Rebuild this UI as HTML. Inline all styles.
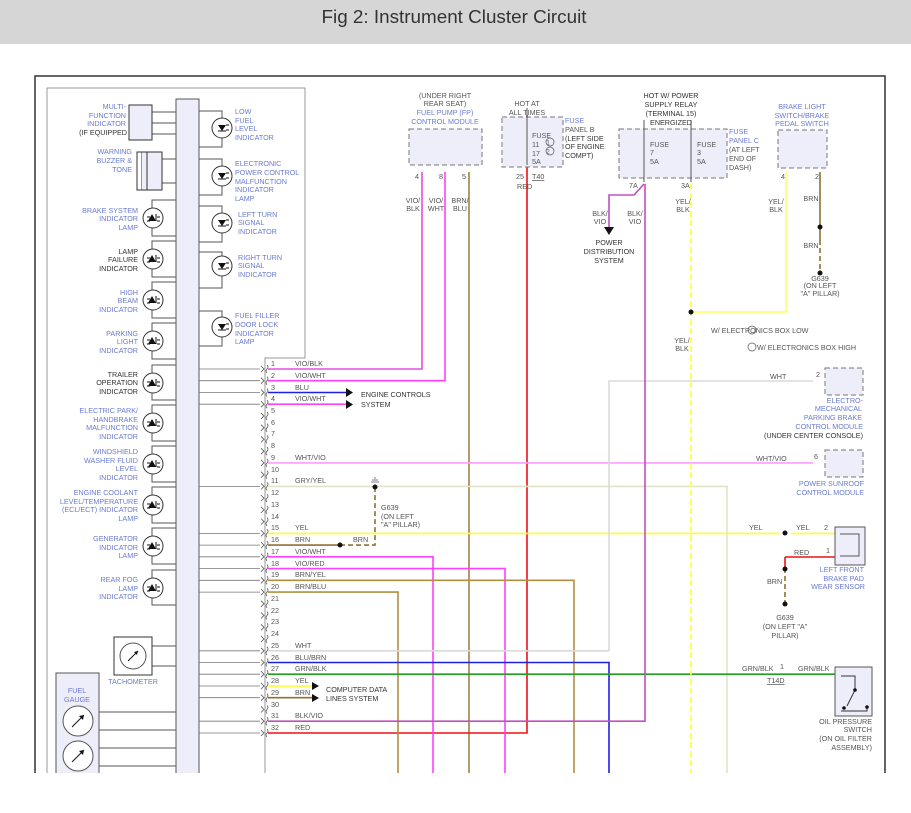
<!DOCTYPE html>
<html><head><meta charset="utf-8"><style>
html,body{margin:0;padding:0;background:#fff;width:911px;height:813px;overflow:hidden}
svg{display:block}
text{font-family:"Liberation Sans",sans-serif;font-size:7.2px;fill:#555}
.b{fill:#6a7bd0}
.r{text-anchor:end}
.m{text-anchor:middle}
.dk{fill:#333}
</style></head><body>
<svg width="911" height="813" viewBox="0 0 911 813" xmlns="http://www.w3.org/2000/svg">
<defs>
<clipPath id="c"><rect x="0" y="0" width="911" height="773"/></clipPath>
<g id="led"><circle r="10" fill="#fff" stroke="#333" stroke-width="1"/><path d="M-1,-4 L3,3 L-5,3 Z" fill="#111"/><path d="M-6,-1h3M-6,3h3M3,-4v7M4,-1h3M4,3h3" stroke="#111" stroke-width="1"/></g>
<g id="ledr"><circle r="10" fill="#fff" stroke="#333" stroke-width="1"/><path d="M-4,-3 L4,-3 L0,3 Z" fill="#111"/><path d="M-4,3h8M4,-3h3M4,2h3" stroke="#111" stroke-width="1"/></g>
<g id="pin"><path d="M-5,-3 l3,3 l-3,3" fill="none" stroke="#555" stroke-width="0.8"/><path d="M1,-4 q2,2 0,4 q-2,2 0,4" fill="none" stroke="#555" stroke-width="0.8"/></g>
</defs>
<rect x="0" y="0" width="911" height="44" fill="#d6d6d6"/>
<text x="454" y="23" class="m" style="font-size:18px;fill:#333" textLength="265" lengthAdjust="spacingAndGlyphs">Fig 2: Instrument Cluster Circuit</text>

<g clip-path="url(#c)">
<rect x="35" y="76" width="850" height="720" fill="#fff" stroke="#333" stroke-width="1.5"/>
<path d="M47,800 V88 H305 V358 H265 V800" fill="none" stroke="#999" stroke-width="1"/>
<rect x="176" y="99" width="23" height="720" fill="#eeeefa" stroke="#555" stroke-width="1"/>

<!-- left column LED boxes -->
<g stroke="#555" fill="none" stroke-width="1">
<path d="M176,200 H152 V236 H176"/><path d="M176,241 H152 V277 H176"/><path d="M176,282 H152 V318 H176"/><path d="M176,323 H152 V359 H176"/>
<path d="M176,365 H152 V400 H176"/><path d="M176,405 H152 V441 H176"/><path d="M176,446 H152 V482 H176"/><path d="M176,487 H152 V523 H176"/>
<path d="M176,528 H152 V564 H176"/><path d="M176,570 H152 V605 H176"/>
<path d="M199,111 H222 V147 H199"/><path d="M199,159 H222 V195 H199"/><path d="M199,206 H222 V242 H199"/><path d="M199,252 H222 V288 H199"/><path d="M199,311 H222 V346 H199"/>
<path d="M152,112 H176 M152,123 H176 M152,134 H176"/>
<path d="M162,159 H176 M162,183 H176"/>
<path d="M152,646 H176 M152,666 H176"/>
<path d="M92,712 H176 M92,730 H176 M92,748 H176 M92,766 H176"/>
</g>
<use href="#led" x="153" y="218"/><use href="#led" x="153" y="259"/><use href="#led" x="153" y="300"/><use href="#led" x="153" y="341"/>
<use href="#led" x="153" y="383"/><use href="#led" x="153" y="423"/><use href="#led" x="153" y="464"/><use href="#led" x="153" y="505"/>
<use href="#led" x="153" y="546"/><use href="#led" x="153" y="588"/>
<use href="#ledr" x="222" y="128"/><use href="#ledr" x="222" y="176"/><use href="#ledr" x="222" y="223"/><use href="#ledr" x="222" y="266"/><use href="#ledr" x="222" y="327"/>

<rect x="129" y="105" width="23" height="35" fill="#eeeefa" stroke="#333"/>
<path d="M137,152 L142,152 L142,190 L137,190 Z" fill="#fff" stroke="#333"/>
<path d="M142,152 L147,152 L147,190 L142,190" fill="#eeeefa" stroke="#333"/>
<rect x="147" y="152" width="15" height="38" fill="#eeeefa" stroke="#333"/>
<rect x="114" y="637" width="38" height="38" fill="#fff" stroke="#333"/>
<circle cx="133" cy="656" r="13" fill="#fff" stroke="#555"/><path d="M128,661 L138,651" stroke="#111" stroke-width="1"/><path d="M138,651 l-4,1 l3,3z" fill="#111"/>
<rect x="56" y="673" width="43" height="120" fill="#eeeefa" stroke="#555"/>
<circle cx="78" cy="721" r="15" fill="#fff" stroke="#555"/><path d="M72,727 L84,715" stroke="#111"/><path d="M84,715 l-5,1 l4,4z" fill="#111"/>
<circle cx="78" cy="756" r="15" fill="#fff" stroke="#555"/><path d="M72,762 L84,750" stroke="#111"/><path d="M84,750 l-5,1 l4,4z" fill="#111"/>

<!-- left labels -->
<g class="r">
<text x="126" y="109" class="b r">MULTI-</text><text x="126" y="118" class="b r">FUNCTION</text><text x="126" y="126" class="b r">INDICATOR</text><text x="127" y="135" class="dk r">(IF EQUIPPED</text>
<text x="132" y="154" class="b r">WARNING</text><text x="132" y="163" class="b r">BUZZER &amp;</text><text x="132" y="172" class="b r">TONE</text>
<text x="138" y="213" class="b r">BRAKE SYSTEM</text><text x="138" y="221" class="b r">INDICATOR</text><text x="138" y="230" class="b r">LAMP</text>
<text x="138" y="254" class="dk r">LAMP</text><text x="138" y="262" class="dk r">FAILURE</text><text x="138" y="271" class="dk r">INDICATOR</text>
<text x="138" y="295" class="b r">HIGH</text><text x="138" y="303" class="b r">BEAM</text><text x="138" y="312" class="b r">INDICATOR</text>
<text x="138" y="336" class="b r">PARKING</text><text x="138" y="344" class="b r">LIGHT</text><text x="138" y="353" class="b r">INDICATOR</text>
<text x="138" y="377" class="dk r">TRAILER</text><text x="138" y="385" class="dk r">OPERATION</text><text x="138" y="394" class="dk r">INDICATOR</text>
<text x="138" y="413" class="b r">ELECTRIC PARK/</text><text x="138" y="422" class="b r">HANDBRAKE</text><text x="138" y="430" class="b r">MALFUNCTION</text><text x="138" y="439" class="b r">INDICATOR</text>
<text x="138" y="454" class="b r">WINDSHIELD</text><text x="138" y="463" class="b r">WASHER FLUID</text><text x="138" y="471" class="b r">LEVEL</text><text x="138" y="480" class="b r">INDICATOR</text>
<text x="138" y="495" class="b r">ENGINE COOLANT</text><text x="138" y="504" class="b r">LEVEL/TEMPERATURE</text><text x="138" y="512" class="b r">(ECL/ECT) INDICATOR</text><text x="138" y="521" class="b r">LAMP</text>
<text x="138" y="541" class="b r">GENERATOR</text><text x="138" y="550" class="b r">INDICATOR</text><text x="138" y="558" class="b r">LAMP</text>
<text x="138" y="582" class="b r">REAR FOG</text><text x="138" y="591" class="b r">LAMP</text><text x="138" y="599" class="b r">INDICATOR</text>
</g>
<text x="133" y="684" class="b m">TACHOMETER</text>
<text x="77" y="693" class="b m">FUEL</text><text x="77" y="702" class="b m">GAUGE</text>
<text x="235" y="114" class="b">LOW</text><text x="235" y="123" class="b">FUEL</text><text x="235" y="131" class="b">LEVEL</text><text x="235" y="140" class="b">INDICATOR</text>
<text x="235" y="166" class="b">ELECTRONIC</text><text x="235" y="175" class="b">POWER CONTROL</text><text x="235" y="184" class="b">MALFUNCTION</text><text x="235" y="192" class="b">INDICATOR</text><text x="235" y="201" class="b">LAMP</text>
<text x="238" y="217" class="b">LEFT TURN</text><text x="238" y="225" class="b">SIGNAL</text><text x="238" y="234" class="b">INDICATOR</text>
<text x="238" y="260" class="b">RIGHT TURN</text><text x="238" y="268" class="b">SIGNAL</text><text x="238" y="277" class="b">INDICATOR</text>
<text x="235" y="318" class="b">FUEL FILLER</text><text x="235" y="327" class="b">DOOR LOCK</text><text x="235" y="336" class="b">INDICATOR</text><text x="235" y="344" class="b">LAMP</text>

<!-- stubs from bar to pins -->
<g stroke="#777" stroke-width="0.8">
<path d="M199,369H260M199,380.7H260M199,392.5H260M199,404.2H260M199,486.4H260M199,533.4H260M199,545.1H260M199,556.8H260M199,568.6H260M199,580.3H260M199,592.1H260M199,650.8H260M199,662.5H260M199,674.2H260M199,686H260M199,697.7H260M199,721.2H260M199,733H260"/>
</g>
<g>
<use href="#pin" x="266" y="369"/><use href="#pin" x="266" y="380.7"/><use href="#pin" x="266" y="392.5"/><use href="#pin" x="266" y="404.2"/><use href="#pin" x="266" y="416"/><use href="#pin" x="266" y="427.7"/><use href="#pin" x="266" y="439.4"/><use href="#pin" x="266" y="451.2"/><use href="#pin" x="266" y="462.9"/><use href="#pin" x="266" y="474.7"/><use href="#pin" x="266" y="486.4"/><use href="#pin" x="266" y="498.1"/><use href="#pin" x="266" y="509.9"/><use href="#pin" x="266" y="521.6"/><use href="#pin" x="266" y="533.4"/><use href="#pin" x="266" y="545.1"/><use href="#pin" x="266" y="556.8"/><use href="#pin" x="266" y="568.6"/><use href="#pin" x="266" y="580.3"/><use href="#pin" x="266" y="592.1"/><use href="#pin" x="266" y="603.8"/><use href="#pin" x="266" y="615.5"/><use href="#pin" x="266" y="627.3"/><use href="#pin" x="266" y="639"/><use href="#pin" x="266" y="650.8"/><use href="#pin" x="266" y="662.5"/><use href="#pin" x="266" y="674.2"/><use href="#pin" x="266" y="686"/><use href="#pin" x="266" y="697.7"/><use href="#pin" x="266" y="709.5"/><use href="#pin" x="266" y="721.2"/><use href="#pin" x="266" y="733"/>
</g>
<g>
<text x="271" y="366">1</text><text x="271" y="378">2</text><text x="271" y="390">3</text><text x="271" y="401">4</text><text x="271" y="413">5</text><text x="271" y="425">6</text><text x="271" y="436">7</text><text x="271" y="448">8</text><text x="271" y="460">9</text><text x="271" y="472">10</text><text x="271" y="483">11</text><text x="271" y="495">12</text><text x="271" y="507">13</text><text x="271" y="519">14</text><text x="271" y="530">15</text><text x="271" y="542">16</text><text x="271" y="554">17</text><text x="271" y="566">18</text><text x="271" y="577">19</text><text x="271" y="589">20</text><text x="271" y="601">21</text><text x="271" y="613">22</text><text x="271" y="624">23</text><text x="271" y="636">24</text><text x="271" y="648">25</text><text x="271" y="660">26</text><text x="271" y="671">27</text><text x="271" y="683">28</text><text x="271" y="695">29</text><text x="271" y="707">30</text><text x="271" y="718">31</text><text x="271" y="730">32</text>
<text x="295" y="366">VIO/BLK</text><text x="295" y="378">VIO/WHT</text><text x="295" y="390">BLU</text><text x="295" y="401">VIO/WHT</text><text x="295" y="460">WHT/VIO</text><text x="295" y="483">GRY/YEL</text><text x="295" y="530">YEL</text><text x="295" y="542">BRN</text><text x="295" y="554">VIO/WHT</text><text x="295" y="566">VIO/RED</text><text x="295" y="577">BRN/YEL</text><text x="295" y="589">BRN/BLU</text><text x="295" y="648">WHT</text><text x="295" y="660">BLU/BRN</text><text x="295" y="671">GRN/BLK</text><text x="295" y="683">YEL</text><text x="295" y="695">BRN</text><text x="295" y="718">BLK/VIO</text><text x="295" y="730">RED</text>
</g>

<!-- wires -->
<g fill="none" stroke-width="1.6">
<path d="M268,369 H422 V172" stroke="#e050e0"/>
<path d="M268,380.7 H445 V172" stroke="#ff40ff"/>
<path d="M268,392.5 H346" stroke="#2020e0"/>
<path d="M268,404.2 H346" stroke="#ff40ff"/>
<path d="M469,172 V800" stroke="#a08040"/>
<path d="M527,115 V733 H268" stroke="#f01010"/>
<path d="M268,462.9 H813" stroke="#ff9cff"/>
<path d="M268,486.4 H727 V800" stroke="#e2e2c8"/>
<path d="M268,533.4 H779 M791,533.4 H835" stroke="#ffff20"/>
<path d="M268,545.1 H340" stroke="#907030"/>
<path d="M340,545.1 H375 V487" stroke="#907030" stroke-dasharray="5,3"/>
<path d="M268,556.8 H433 V800" stroke="#ff40ff"/>
<path d="M268,568.6 H505 V800" stroke="#ff40ff"/>
<path d="M268,580.3 H574 V800" stroke="#b09040"/>
<path d="M268,592.1 H398 V800" stroke="#b09040"/>
<path d="M268,650.8 H609 V381 H813" stroke="#dadada"/>
<path d="M268,662.5 H609 V800" stroke="#2020e0"/>
<path d="M268,674.2 H835" stroke="#20a020"/>
<path d="M268,686 H312" stroke="#ffff20"/>
<path d="M268,697.7 H312" stroke="#907030"/>
<path d="M268,721.2 H645 V184" stroke="#c050c0"/>
<path d="M644,184 L634,195 H609 V228" stroke="#c050c0"/>
<path d="M691,184 V800" stroke="#ffff30" stroke-dasharray="6,3"/>
<path d="M691,312 H786 V172" stroke="#ffff60"/>
<path d="M820,172 V240" stroke="#907030"/>
<path d="M820,240 V272" stroke="#907030" stroke-dasharray="5,3"/>
<path d="M785,557 V568" stroke="#f01010"/><path d="M785,557 H835" stroke="#f01010"/>
<path d="M785,568 V604" stroke="#907030" stroke-dasharray="5,3"/>
</g>
<path d="M346,388 l7,4.5 l-7,4.5z M346,400 l7,4.5 l-7,4.5z M312,682 l7,4 l-7,4z M312,694 l7,4 l-7,4z M604,227 l5,8 l5,-8z" fill="#111"/>
<text x="361" y="397" class="dk">ENGINE CONTROLS</text><text x="361" y="407" class="dk">SYSTEM</text>
<text x="326" y="692" class="dk">COMPUTER DATA</text><text x="326" y="701" class="dk">LINES SYSTEM</text>
<circle cx="340" cy="545" r="2.5" fill="#111"/><text x="353" y="542">BRN</text>
<circle cx="375" cy="487" r="2.5" fill="#111"/><path d="M371,482h8M372,480h6M374,478h2" stroke="#555" stroke-width="0.8"/>
<text x="381" y="510">G639</text><text x="381" y="519">(ON LEFT</text><text x="381" y="527">"A" PILLAR)</text>

<!-- top modules -->
<rect x="409" y="129" width="73" height="36" fill="#eeeefa" stroke="#777" stroke-dasharray="5,3"/>
<text x="445" y="98" class="m">(UNDER RIGHT</text><text x="445" y="106" class="m">REAR SEAT)</text><text x="445" y="115" class="b m">FUEL PUMP (FP)</text><text x="445" y="124" class="b m">CONTROL MODULE</text>
<text x="417" y="179" class="m">4</text><text x="441" y="179" class="m">8</text><text x="464" y="179" class="m">5</text>
<text x="413" y="203" class="m">VIO/</text><text x="413" y="211" class="m">BLK</text><text x="436" y="203" class="m">VIO/</text><text x="436" y="211" class="m">WHT</text><text x="460" y="203" class="m">BRN/</text><text x="460" y="211" class="m">BLU</text>

<rect x="502" y="117" width="61" height="50" fill="#eeeefa" stroke="#777" stroke-dasharray="5,3"/>
<path d="M527,108 V165" stroke="#555" fill="none"/>
<text x="527" y="106" class="m">HOT AT</text><text x="527" y="115" class="m">ALL TIMES</text>
<text x="532" y="138">FUSE</text><text x="532" y="147">11</text><text x="532" y="156">17</text><text x="532" y="164">5A</text>
<circle cx="550" cy="142" r="4" fill="none" stroke="#555" stroke-width="0.7"/><circle cx="550" cy="151" r="4" fill="none" stroke="#555" stroke-width="0.7"/>
<text x="548" y="144.5" class="m" style="font-size:6px">1</text><text x="548" y="153.5" class="m" style="font-size:6px">2</text>
<text x="565" y="123" class="b">FUSE</text><text x="565" y="132">PANEL B</text><text x="565" y="141" class="dk">(LEFT SIDE</text><text x="565" y="149" class="dk">OF ENGINE</text><text x="565" y="158" class="dk">COMPT)</text>
<text x="516" y="179">25</text><text x="532" y="179" style="text-decoration:underline">T40</text><text x="517" y="189">RED</text>

<rect x="619" y="129" width="108" height="49" fill="#eeeefa" stroke="#777" stroke-dasharray="5,3"/>
<path d="M644,120 V182 M691,120 V182" stroke="#555" fill="none"/>
<text x="671" y="98" class="m dk">HOT W/ POWER</text><text x="671" y="107" class="m dk">SUPPLY RELAY</text><text x="671" y="116" class="m dk">(TERMINAL 15)</text><text x="671" y="125" class="m dk">ENERGIZED</text>
<text x="650" y="147">FUSE</text><text x="650" y="155">7</text><text x="650" y="164">5A</text>
<text x="697" y="147">FUSE</text><text x="697" y="155">3</text><text x="697" y="164">5A</text>
<text x="729" y="134" class="b">FUSE</text><text x="729" y="143" class="b">PANEL C</text><text x="729" y="152">(AT LEFT</text><text x="729" y="161">END OF</text><text x="729" y="170">DASH)</text>
<text x="629" y="188">7A</text><text x="681" y="188">3A</text>
<text x="600" y="216" class="m">BLK/</text><text x="600" y="224" class="m">VIO</text><text x="635" y="216" class="m">BLK/</text><text x="635" y="224" class="m">VIO</text>
<text x="683" y="204" class="m">YEL/</text><text x="683" y="212" class="m">BLK</text>
<text x="609" y="245" class="m dk">POWER</text><text x="609" y="254" class="m dk">DISTRIBUTION</text><text x="609" y="263" class="m dk">SYSTEM</text>
<text x="682" y="343" class="m">YEL/</text><text x="682" y="351" class="m">BLK</text>
<circle cx="691" cy="312" r="2.5" fill="#111"/>

<rect x="778" y="130" width="49" height="38" fill="#eeeefa" stroke="#777" stroke-dasharray="5,3"/>
<text x="802" y="109" class="b m">BRAKE LIGHT</text><text x="802" y="118" class="b m">SWITCH/BRAKE</text><text x="802" y="126" class="b m">PEDAL SWITCH</text>
<text x="781" y="179">4</text><text x="815" y="179">2</text>
<text x="776" y="204" class="m">YEL/</text><text x="776" y="212" class="m">BLK</text>
<text x="811" y="201" class="m">BRN</text><text x="811" y="248" class="m">BRN</text>
<circle cx="820" cy="227" r="2.5" fill="#111"/><circle cx="820" cy="273" r="2.5" fill="#111"/>
<text x="820" y="281" class="m">G639</text><text x="820" y="288" class="m">(ON LEFT</text><text x="820" y="296" class="m">"A" PILLAR)</text>

<text x="711" y="333">W/ ELECTRONICS BOX LOW</text><circle cx="752" cy="330" r="4" fill="none" stroke="#555" stroke-width="0.7"/>
<text x="757" y="350">W/ ELECTRONICS BOX HIGH</text><circle cx="752" cy="347" r="4" fill="none" stroke="#555" stroke-width="0.7"/>

<rect x="825" y="368" width="38" height="27" fill="#eeeefa" stroke="#777" stroke-dasharray="5,3"/>
<text x="770" y="379">WHT</text><text x="816" y="377">2</text>
<text x="863" y="403" class="b r">ELECTRO-</text><text x="862" y="411" class="b r">MECHANICAL</text><text x="862" y="420" class="b r">PARKING BRAKE</text><text x="863" y="429" class="b r">CONTROL MODULE</text><text x="863" y="438" class="dk r">(UNDER CENTER CONSOLE)</text>
<rect x="825" y="450" width="38" height="27" fill="#eeeefa" stroke="#777" stroke-dasharray="5,3"/>
<text x="756" y="461">WHT/VIO</text><text x="814" y="459">6</text>
<text x="864" y="486" class="b r">POWER SUNROOF</text><text x="864" y="495" class="b r">CONTROL MODULE</text>

<rect x="835" y="527" width="30" height="38" fill="#eeeefa" stroke="#555"/>
<path d="M840,534 H859 V556 H840" fill="none" stroke="#555"/>
<text x="749" y="530">YEL</text><text x="796" y="530">YEL</text><text x="824" y="530">2</text>
<circle cx="785" cy="533" r="2.5" fill="#111"/>
<text x="794" y="555">RED</text><text x="826" y="553">1</text>
<circle cx="785" cy="569" r="2.5" fill="#111"/><text x="767" y="584">BRN</text>
<circle cx="785" cy="604" r="2.5" fill="#111"/>
<text x="785" y="620" class="m">G639</text><text x="785" y="629" class="m">(ON LEFT "A"</text><text x="785" y="638" class="m">PILLAR)</text>
<text x="864" y="572" class="b r">LEFT FRONT</text><text x="864" y="581" class="b r">BRAKE PAD</text><text x="865" y="589" class="b r">WEAR SENSOR</text>

<rect x="835" y="667" width="37" height="49" fill="#eeeefa" stroke="#555"/>
<path d="M841,676 H855 V690 L847,706 M867,707 V711 H841" fill="none" stroke="#333"/>
<circle cx="855" cy="690" r="1.8" fill="#111"/><circle cx="844" cy="708" r="1.8" fill="#111"/><circle cx="867" cy="707" r="1.8" fill="#111"/>
<text x="742" y="671">GRN/BLK</text><text x="780" y="669">1</text><text x="798" y="671">GRN/BLK</text>
<text x="767" y="683" style="text-decoration:underline">T14D</text>
<text x="872" y="724" class="r">OIL PRESSURE</text><text x="872" y="732" class="r">SWITCH</text><text x="872" y="741" class="r">(ON OIL FILTER</text><text x="872" y="750" class="r">ASSEMBLY)</text>
</g>
</svg>
</body></html>
